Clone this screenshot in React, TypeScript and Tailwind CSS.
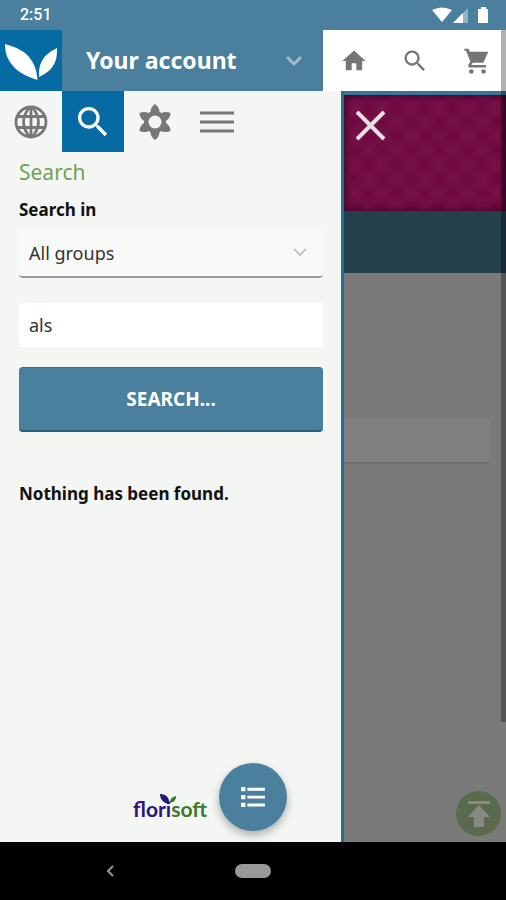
import { useState } from "react";
import type { ReactNode } from "react";

function Leaves() {
  return (
    <svg width="62" height="61" viewBox="0 0 62 61" fill="#fff" aria-hidden="true">
      <path d="M5 14C16 17 24 21 29 27C35 34 37 42 37.500 50C28 47 19 43 13 36C7 29 5 22 5 14Z" />
      <path d="M57 18C57 24 57 30 53 36C50 41 45 44 39 47C39 41 39 36 42 31C45 25 51 21 57 18Z" />
    </svg>
  );
}

function Glyph({ size, d, className }: { size: number; d: string; className?: string }) {
  return (
    <svg width={size} height={size} viewBox="0 0 24 24" fill="currentColor" className={className} aria-hidden="true">
      <path d={d} />
    </svg>
  );
}

const HOME = "M10 20v-6h4v6h5v-8h3L12 3 2 12h3v8z";
const SEARCH =
  "M15.5 14h-.79l-.28-.27C15.41 12.59 16 11.11 16 9.5 16 5.91 13.09 3 9.5 3S3 5.91 3 9.5 5.91 16 9.5 16c1.61 0 3.09-.59 4.23-1.57l.27.28v.79l5 4.99L20.49 19l-4.99-5zm-6 0C7.01 14 5 11.99 5 9.5S7.01 5 9.5 5 14 7.01 14 9.5 11.99 14 9.5 14z";
const CART =
  "M2 1.500h3.500l1.300 2.500H22.500l-4.200 9.500H9.200L8 15.500h12.500v2H6.500C5.200 17.500 5 16.300 5.500 15.300L7.200 12.500 3.800 4 3.300 3.300H2zM8 19a2 2 0 1 1 0 4 2 2 0 0 1 0-4zM18.500 19a2 2 0 1 1 0 4 2 2 0 0 1 0-4z";
const LIST =
  "M2.500 4h3.400v3.400H2.500zM2.500 10.300h3.400v3.400H2.500zM2.500 16.600h3.400V20H2.500zM7.500 4.600H21.500v2.300H7.500zM7.500 10.900H21.500v2.300H7.500zM7.500 17.200H21.500v2.300H7.500z";

function Globe() {
  return (
    <svg width="36" height="36" viewBox="0 0 36 36" fill="none" stroke="#777" strokeWidth="2.8" aria-hidden="true">
      <circle cx="18" cy="18" r="15" />
      <path d="M18 3v30M5 12.500h26M5 23.500h26M16 4C9 13 9 23 16 32M20 4C27 13 27 23 20 32" />
    </svg>
  );
}

function Flower() {
  return (
    <svg width="36" height="36" viewBox="0 0 36 36" aria-hidden="true">
      <g fill="#777">
        {[0, 60, 120, 180, 240, 300].map((a) => (
          <path key={a} transform={`rotate(${a} 18 18)`} d="M18 0C21 2 22.500 5 22.500 8L23 12H13L13.500 8C13.500 5 15 2 18 0Z" />
        ))}
        <circle cx="18" cy="18" r="11" />
      </g>
      <circle cx="18" cy="18" r="6.500" fill="#f3f6f3" />
    </svg>
  );
}

function MenuLines() {
  return (
    <svg width="34" height="26" viewBox="0 0 34 26" stroke="#777" strokeWidth="3" aria-hidden="true">
      <path d="M0 4h34M0 13h34M0 22h34" />
    </svg>
  );
}

function Tab({ label, active, children }: { label: string; active?: boolean; children: ReactNode }) {
  return (
    <button
      type="button"
      aria-label={label}
      className={`flex h-[61px] w-[62px] items-center justify-center ${active ? "bg-[#066ba3] text-white" : ""}`}
    >
      {children}
    </button>
  );
}

function StatusBar() {
  return (
    <div className="flex h-[30px] items-center justify-between bg-[#4a809d] pr-4 pl-5 text-white">
      <span className="font-['Roboto',sans-serif] text-base font-medium">2:51</span>
      <svg width="58" height="18" viewBox="0 0 58 18" fill="#fff" aria-hidden="true">
        <path d="M0 4Q10 -1 20 4L10 16Z" />
        <path d="M21 17L36 2V17Z" opacity=".4" />
        <path d="M21 17L31 7V17Z" />
        <path d="M49 1h5v2h2v14H46V3h3z" />
      </svg>
    </div>
  );
}

function Header() {
  const actions = [
    { label: "Home", d: HOME },
    { label: "Search", d: SEARCH },
    { label: "Cart", d: CART },
  ];
  return (
    <header className="flex h-[61px] bg-[#4a809d]">
      <a href="#home" aria-label="Florisoft" className="bg-[#066ba3]">
        <Leaves />
      </a>
      <button type="button" className="flex flex-1 items-center justify-between pr-5 pl-6 text-white">
        <span className="text-[23px] font-bold">Your account</span>
        <svg width="18" height="12" viewBox="0 0 18 12" fill="none" stroke="#a3bbc8" strokeWidth="3" aria-hidden="true">
          <path d="M2 2l7 7 7-7" />
        </svg>
      </button>
      <nav className="flex bg-white text-[#757575]">
        {actions.map((a) => (
          <a key={a.label} href={`#${a.label.toLowerCase()}`} aria-label={a.label} className="flex w-[61px] items-center justify-center">
            <Glyph size={28} d={a.d} />
          </a>
        ))}
      </nav>
    </header>
  );
}

function Brand() {
  return (
    <div className="relative w-[75px] font-['Lato',sans-serif] text-[21px] leading-6 font-bold text-[#3d7a2c]">
      <span className="text-[#2a1578]">flori</span>soft
      <svg className="absolute -top-1 left-[26px]" width="18" height="12" viewBox="0 0 18 12" aria-hidden="true">
        <path d="M1 1C7 1 11 5 10 11C4 10 1 6 1 1Z" fill="#2a1578" />
        <path d="M17 3C17 7 15 9 11 10C11 6 13 4 17 3Z" fill="#2e7d26" />
      </svg>
    </div>
  );
}

function Drawer() {
  const [query, setQuery] = useState("als");
  return (
    <aside className="flex w-[68%] flex-col border-r-[3px] border-[#1a7295] bg-[#f3f6f3]">
      <div className="flex">
        <Tab label="Language"><Globe /></Tab>
        <Tab label="Search" active><Glyph size={40} d={SEARCH} /></Tab>
        <Tab label="Flowers"><Flower /></Tab>
        <Tab label="Menu"><MenuLines /></Tab>
      </div>
      <form className="flex flex-col pr-[18px] pl-[19px]" onSubmit={(e) => e.preventDefault()}>
        <h2 className="h-10 text-[21px] leading-10 text-[#71a252]">Search</h2>
        <label htmlFor="group" className="h-9 text-[17px] leading-9 font-bold text-[#111]">Search in</label>
        <div className="relative">
          <select id="group" className="h-[50px] w-full appearance-none rounded-sm border-b-2 border-[#999] bg-[#f9faf8] px-[10px] pt-[2px] text-lg text-[#333]">
            <option>All groups</option>
          </select>
          <svg className="pointer-events-none absolute top-5 right-4" width="14" height="10" viewBox="0 0 14 10" fill="none" stroke="#c4c6c4" strokeWidth="2" aria-hidden="true">
            <path d="M1 1l6 6 6-6" />
          </svg>
        </div>
        <input
          aria-label="Search text"
          value={query}
          onChange={(e) => setQuery(e.target.value)}
          className="mt-[25px] h-11 bg-white px-[10px] text-lg text-[#333] outline-none"
        />
        <button type="submit" className="mt-5 h-[65px] rounded-sm border-t border-b-2 border-t-[#3c708b] border-b-[#2b5f79] bg-[#4a809d] text-[19px] font-bold text-white">
          SEARCH...
        </button>
        <p className="mt-12 text-[17px] leading-7 font-bold text-[#111]">Nothing has been found.</p>
      </form>
      <div className="mt-auto flex items-center justify-end gap-[11px] pr-[54px] pb-[11px]">
        <div className="pt-6"><Brand /></div>
        <button type="button" aria-label="List" className="flex size-[68px] items-center justify-center rounded-full bg-[#4a809d] text-white shadow-[0_4px_8px_rgba(0,0,0,0.3)]">
          <Glyph size={30} d={LIST} />
        </button>
      </div>
    </aside>
  );
}

function Backdrop() {
  return (
    <main className="flex flex-1 flex-col border-t-4 border-[#3b7590] bg-[#7a7b78]">
      <div className="h-[116px] bg-[#70063f] bg-[repeating-linear-gradient(45deg,rgba(125,45,90,0.2)_0px,transparent_10px,rgba(125,45,90,0.2)_20px),repeating-linear-gradient(-45deg,rgba(125,45,90,0.2)_0px,transparent_10px,rgba(125,45,90,0.2)_20px)] pt-3 pl-3 shadow-[inset_0_0_9px_#30001c]">
        <button type="button" aria-label="Close" className="block">
          <svg width="30" height="36" viewBox="0 0 30 36" stroke="#e6e2e4" strokeWidth="4" aria-hidden="true">
            <path d="M1 5l27 27M28 5L1 32" />
          </svg>
        </button>
      </div>
      <div className="h-[62px] bg-[#25404d]" />
      <div className="mt-[145px] mr-4 h-[46px] rounded-r-sm border-b-2 border-[#707070] bg-[#808080]" />
      <a href="#top" aria-label="Back to top" className="mt-auto mr-[5px] mb-[6px] self-end">
        <svg width="45" height="45" viewBox="0 0 45 45" aria-hidden="true">
          <circle cx="22.500" cy="22.500" r="22.500" fill="#5b694c" />
          <path d="M12 10h22v3H12zM23 14L34 26H28V36H18V26H12z" fill="#878a83" />
        </svg>
      </a>
    </main>
  );
}

export default function App() {
  return (
    <div className="relative flex min-h-screen flex-col font-['Noto_Sans','Open_Sans',sans-serif]">
      <StatusBar />
      <Header />
      <div className="flex flex-1">
        <Drawer />
        <Backdrop />
      </div>
      <nav className="grid h-[58px] grid-cols-[1fr_36px_1fr] items-center bg-black">
        <button type="button" aria-label="Back" className="ml-[104px] w-3">
          <svg width="12" height="14" viewBox="0 0 12 14" fill="none" stroke="#999" strokeWidth="2" aria-hidden="true">
            <path d="M9 2L4 7l5 5" />
          </svg>
        </button>
        <button type="button" aria-label="Home screen" className="h-[14px] rounded-full bg-[#999]" />
      </nav>
      <div className="pointer-events-none absolute top-[30px] right-0 h-[692px] w-[5px] bg-black/30" />
    </div>
  );
}
